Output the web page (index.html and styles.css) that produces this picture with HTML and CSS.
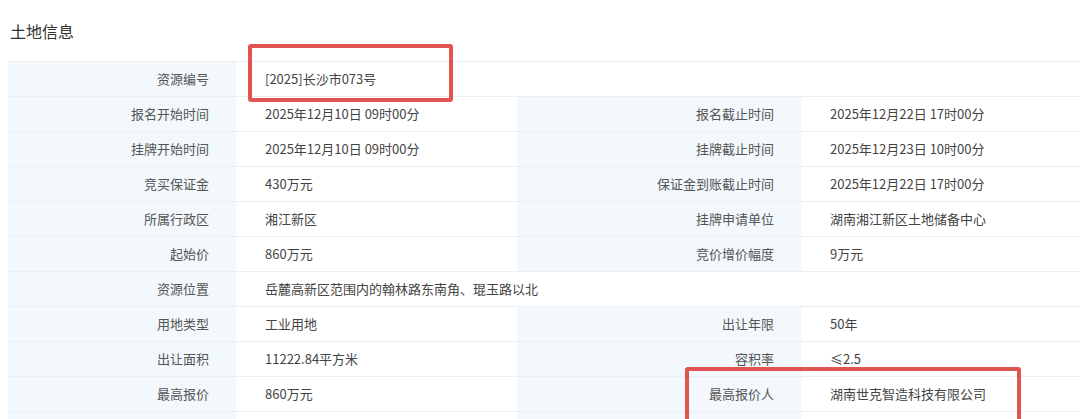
FILE: index.html
```html
<!DOCTYPE html>
<html lang="zh-CN">
<head>
    <meta charset="UTF-8">
    <meta name="viewport" content="width=device-width, initial-scale=1.0">
    <title>土地信息</title>
    <link rel="stylesheet" href="styles.css">
</head>
<body>

    <h3 class="title">土地信息</h3>

    <div class="sheet">
        <table class="info">
            <colgroup>
                <col class="c-label1">
                <col class="c-value1">
                <col class="c-label2">
                <col class="c-value2">
            </colgroup>
            <tbody>
                <tr>
                    <th>资源编号</th>
                    <td colspan="3">[2025]长沙市073号</td>
                </tr>
                <tr>
                    <th>报名开始时间</th>
                    <td>2025年12月10日 09时00分</td>
                    <th>报名截止时间</th>
                    <td>2025年12月22日 17时00分</td>
                </tr>
                <tr>
                    <th>挂牌开始时间</th>
                    <td>2025年12月10日 09时00分</td>
                    <th>挂牌截止时间</th>
                    <td>2025年12月23日 10时00分</td>
                </tr>
                <tr>
                    <th>竞买保证金</th>
                    <td>430万元</td>
                    <th>保证金到账截止时间</th>
                    <td>2025年12月22日 17时00分</td>
                </tr>
                <tr>
                    <th>所属行政区</th>
                    <td>湘江新区</td>
                    <th>挂牌申请单位</th>
                    <td>湖南湘江新区土地储备中心</td>
                </tr>
                <tr>
                    <th>起始价</th>
                    <td>860万元</td>
                    <th>竞价增价幅度</th>
                    <td>9万元</td>
                </tr>
                <tr>
                    <th>资源位置</th>
                    <td colspan="3">岳麓高新区范围内的翰林路东南角、琨玉路以北</td>
                </tr>
                <tr>
                    <th>用地类型</th>
                    <td>工业用地</td>
                    <th>出让年限</th>
                    <td>50年</td>
                </tr>
                <tr>
                    <th>出让面积</th>
                    <td>11222.84平方米</td>
                    <th>容积率</th>
                    <td>≤2.5</td>
                </tr>
                <tr>
                    <th>最高报价</th>
                    <td>860万元</td>
                    <th>最高报价人</th>
                    <td>湖南世克智造科技有限公司</td>
                </tr>
                <tr>
                    <th>&nbsp;</th>
                    <td>&nbsp;</td>
                    <th>&nbsp;</th>
                    <td>&nbsp;</td>
                </tr>
            </tbody>
        </table>

        <!-- red highlight marks -->
        <div class="mark mark-code"></div>
        <div class="mark mark-winner"></div>
    </div>

</body>
</html>
```

FILE: styles.css
```css
body {
    margin: 0;
    background: #ffffff;
    font-family: "Noto Sans CJK SC", "Noto Sans", sans-serif;
    color: #444;
    overflow: hidden;
}

.title {
    margin: 0;
    padding: 19px 0 0 10px;
    height: 61px;
    box-sizing: border-box;
    font-size: 16px;
    line-height: 24px;
    font-weight: normal;
    color: #333;
}

.sheet {
    position: relative;
    margin-left: 8px;
}

.info {
    width: 1120px;
    border-collapse: collapse;
    table-layout: fixed;
    font-size: 13px;
}

.c-label1 { width: 228px; }
.c-value1 { width: 281px; }
.c-label2 { width: 284px; }

.info th,
.info td {
    height: 34px;
    padding: 0;
    border-top: 1px solid #e9eef2;
    line-height: 20px;
    white-space: nowrap;
}

.info th {
    background: #f2f8fc;
    font-weight: normal;
    color: #555;
    text-align: right;
    padding-right: 27px;
}

.info td {
    background: #ffffff;
    text-align: left;
    padding-left: 29px;
    color: #444;
}

.mark {
    position: absolute;
    border: 4px solid #e05552;
    border-radius: 3px;
    box-sizing: border-box;
}

.mark-code {
    left: 240px;
    top: -17px;
    width: 205px;
    height: 58px;
}

.mark-winner {
    left: 677px;
    top: 306px;
    width: 336px;
    height: 60px;
}
```
